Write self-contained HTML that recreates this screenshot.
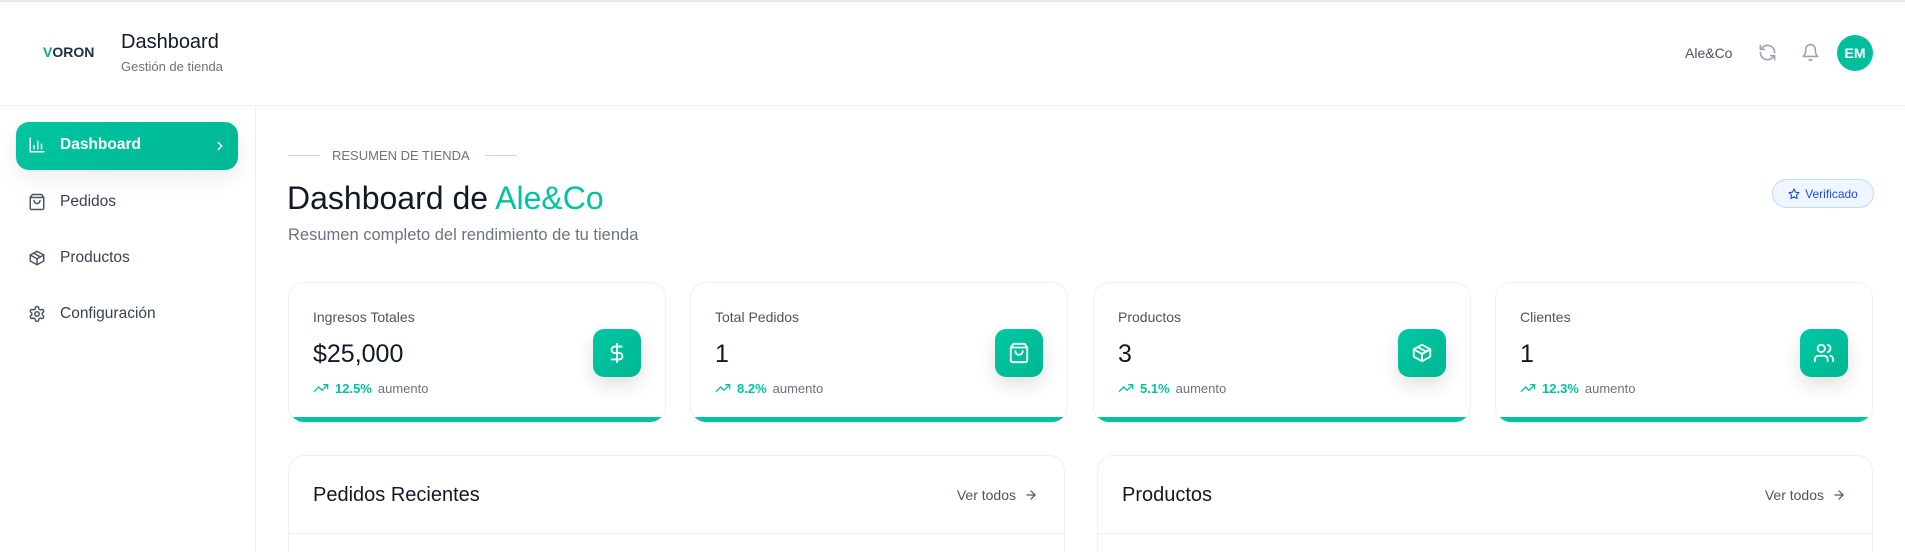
<!DOCTYPE html>
<html style="height:552px;overflow:hidden"><head><meta charset="utf-8"><style>
*{box-sizing:border-box;margin:0;padding:0}
body{width:1905px;height:552px;overflow:hidden;background:#fff;font-family:"Liberation Sans",sans-serif;color:#111827;position:relative}
.abs{position:absolute}
.teal{color:#00c4a0}
svg{display:block}
.card{position:absolute;top:282px;width:378px;height:141px;border:1px solid #eef0f2;border-radius:16px;overflow:hidden;background:#fff}
.card .bar{position:absolute;left:0;right:0;bottom:0;height:5px;background:#00c4a0}
.card .lab{position:absolute;left:24px;top:26px;font-size:14px;color:#4b5563}
.card .val{position:absolute;left:24px;top:57px;font-size:25px;color:#111827}
.card .tr{position:absolute;left:24px;top:97px;font-size:13px;color:#6b7280;display:flex;align-items:center;gap:6px}
.card .tr b{color:#00c4a0;font-weight:bold}
.card .ic{position:absolute;left:304px;top:46px;width:48px;height:48px;border-radius:11px;background:linear-gradient(135deg,#00c9a3,#00b594);box-shadow:0 8px 18px rgba(0,0,0,.12);display:flex;align-items:center;justify-content:center}
.panel{position:absolute;top:455px;height:97px;border:1px solid #eef0f2;border-bottom:none;border-radius:16px 16px 0 0;background:#fff}
.panel .t{position:absolute;left:24px;top:28px;font-size:20px;color:#111827}
.panel .v{position:absolute;right:26px;top:31px;font-size:14px;color:#4b5563;display:flex;align-items:center;gap:8px}
.panel .d{position:absolute;left:0;right:0;top:77px;border-top:1px solid #eef0f2}
.nav{position:absolute;left:28px;display:flex;align-items:center;gap:14px;font-size:15.5px;color:#374151}
</style></head><body>
<div class="abs" style="left:0;top:0;width:1905px;height:2px;background:#e5e7eb"></div>
<div class="abs" style="left:0;top:105px;width:1905px;height:1px;background:#eef0f2"></div>
<div class="abs" style="left:255px;top:106px;width:1px;height:446px;background:#eef0f2"></div>

<div class="abs" style="left:43px;top:44px;font-size:14px;font-weight:bold;color:#1f2f46"><span style="color:#0aa88f">V</span>ORON</div>
<div class="abs" style="left:121px;top:31px;font-size:20px;color:#111827">Dashboard</div>
<div class="abs" style="left:121px;top:59px;font-size:13px;color:#6b7280">Gestión de tienda</div>

<div class="abs" style="left:1685px;top:45px;font-size:14px;color:#4b5563">Ale&amp;Co</div>
<svg class="abs" style="left:1758px;top:43px" width="19" height="19" viewBox="0 0 24 24" fill="none" stroke="#9ca3af" stroke-width="2" stroke-linecap="round" stroke-linejoin="round"><path d="M21 12a9 9 0 0 0-15-6.7L3 8"/><path d="M3 3v5h5"/><path d="M3 12a9 9 0 0 0 15 6.7L21 16"/><path d="M16 16h5v5"/></svg>
<svg class="abs" style="left:1801px;top:43px" width="19" height="19" viewBox="0 0 24 24" fill="none" stroke="#9ca3af" stroke-width="2" stroke-linecap="round" stroke-linejoin="round"><path d="M6 8a6 6 0 0 1 12 0c0 7 3 9 3 9H3s3-2 3-9"/><path d="M10.3 21a1.94 1.94 0 0 0 3.4 0"/></svg>
<div class="abs" style="left:1837px;top:35px;width:36px;height:36px;border-radius:50%;background:#00bf9c;color:#fff;font-weight:bold;font-size:14px;display:flex;align-items:center;justify-content:center">EM</div>

<div class="abs" style="left:16px;top:122px;width:222px;height:48px;border-radius:13px;background:linear-gradient(135deg,#00c4a0,#00b896);box-shadow:0 8px 20px rgba(0,0,0,.08)"></div>
<div class="nav" style="top:136px;color:#fff;font-weight:bold">
<svg width="18" height="18" viewBox="0 0 24 24" fill="none" stroke="#fff" stroke-width="2" stroke-linecap="round"><path d="M3 3v18h18"/><path d="M8 17v-4"/><path d="M13 17V7"/><path d="M18 17v-6"/></svg>Dashboard</div>
<svg class="abs" style="left:213px;top:139px" width="14" height="14" viewBox="0 0 24 24" fill="none" stroke="#fff" stroke-width="2.5" stroke-linecap="round"><path d="M9 6l6 6-6 6"/></svg>
<div class="nav" style="top:193px"><svg width="18" height="18" viewBox="0 0 24 24" fill="none" stroke="#4b5563" stroke-width="2" stroke-linecap="round" stroke-linejoin="round"><path d="M6 2 3 6v14a2 2 0 0 0 2 2h14a2 2 0 0 0 2-2V6l-3-4z"/><path d="M3 6h18"/><path d="M16 10a4 4 0 0 1-8 0"/></svg>Pedidos</div>
<div class="nav" style="top:249px"><svg width="18" height="18" viewBox="0 0 24 24" fill="none" stroke="#4b5563" stroke-width="2" stroke-linecap="round" stroke-linejoin="round"><path d="M21 8 12 3 3 8v8l9 5 9-5z"/><path d="M3 8l9 5 9-5"/><path d="M12 13v8"/><path d="M7.5 5.5l9 5"/></svg>Productos</div>
<div class="nav" style="top:305px"><svg width="18" height="18" viewBox="0 0 24 24" fill="none" stroke="#4b5563" stroke-width="2" stroke-linecap="round" stroke-linejoin="round"><circle cx="12" cy="12" r="3"/><path d="M12.2 2h-.4a2 2 0 0 0-2 2v.2a2 2 0 0 1-1 1.7l-.4.3a2 2 0 0 1-2 0l-.2-.1a2 2 0 0 0-2.7.7l-.2.4a2 2 0 0 0 .7 2.7l.2.1a2 2 0 0 1 1 1.7v.5a2 2 0 0 1-1 1.7l-.2.1a2 2 0 0 0-.7 2.7l.2.4a2 2 0 0 0 2.7.7l.2-.1a2 2 0 0 1 2 0l.4.3a2 2 0 0 1 1 1.7v.2a2 2 0 0 0 2 2h.4a2 2 0 0 0 2-2v-.2a2 2 0 0 1 1-1.7l.4-.3a2 2 0 0 1 2 0l.2.1a2 2 0 0 0 2.7-.7l.2-.4a2 2 0 0 0-.7-2.7l-.2-.1a2 2 0 0 1-1-1.7v-.5a2 2 0 0 1 1-1.7l.2-.1a2 2 0 0 0 .7-2.7l-.2-.4a2 2 0 0 0-2.7-.7l-.2.1a2 2 0 0 1-2 0l-.4-.3a2 2 0 0 1-1-1.7V4a2 2 0 0 0-2-2z"/></svg>Configuración</div>

<div class="abs" style="left:288px;top:155px;width:32px;height:1px;background:#d1d5db"></div>
<div class="abs" style="left:332px;top:148px;font-size:13px;color:#6b7280">RESUMEN DE TIENDA</div>
<div class="abs" style="left:485px;top:155px;width:32px;height:1px;background:#d1d5db"></div>
<div class="abs" style="left:287px;top:180px;font-size:32px;color:#111827">Dashboard de <span class="teal">Ale&amp;Co</span></div>
<div class="abs" style="left:288px;top:226px;font-size:16.5px;color:#6b7280">Resumen completo del rendimiento de tu tienda</div>
<div class="abs" style="left:1772px;top:179px;width:102px;height:29px;border-radius:15px;border:1px solid #bfdbfe;background:#eff6ff;display:flex;align-items:center;justify-content:center;gap:5px;font-size:12px;color:#1d4ed8">
<svg width="12" height="12" viewBox="0 0 24 24" fill="none" stroke="#1d4ed8" stroke-width="2.2" stroke-linejoin="round"><path d="M12 2l3.1 6.3 6.9 1-5 4.9 1.2 6.8L12 17.8 5.8 21l1.2-6.8-5-4.9 6.9-1z"/></svg>Verificado</div>

<div class="card" style="left:288px"><div class="lab">Ingresos Totales</div><div class="val">$25,000</div>
<div class="tr"><svg width="16" height="16" viewBox="0 0 24 24" fill="none" stroke="#00c4a0" stroke-width="2" stroke-linecap="round" stroke-linejoin="round"><path d="M22 7l-8.5 8.5-5-5L2 17"/><path d="M16 7h6v6"/></svg><b>12.5%</b>aumento</div>
<div class="ic"><svg width="22" height="22" viewBox="0 0 24 24" fill="none" stroke="#fff" stroke-width="2" stroke-linecap="round"><path d="M12 2v20"/><path d="M17 5H9.5a3.5 3.5 0 0 0 0 7h5a3.5 3.5 0 0 1 0 7H6"/></svg></div><div class="bar"></div></div>
<div class="card" style="left:690px"><div class="lab">Total Pedidos</div><div class="val">1</div>
<div class="tr"><svg width="16" height="16" viewBox="0 0 24 24" fill="none" stroke="#00c4a0" stroke-width="2" stroke-linecap="round" stroke-linejoin="round"><path d="M22 7l-8.5 8.5-5-5L2 17"/><path d="M16 7h6v6"/></svg><b>8.2%</b>aumento</div>
<div class="ic"><svg width="22" height="22" viewBox="0 0 24 24" fill="none" stroke="#fff" stroke-width="2" stroke-linecap="round" stroke-linejoin="round"><path d="M6 2 3 6v14a2 2 0 0 0 2 2h14a2 2 0 0 0 2-2V6l-3-4z"/><path d="M3 6h18"/><path d="M16 10a4 4 0 0 1-8 0"/></svg></div><div class="bar"></div></div>
<div class="card" style="left:1093px"><div class="lab">Productos</div><div class="val">3</div>
<div class="tr"><svg width="16" height="16" viewBox="0 0 24 24" fill="none" stroke="#00c4a0" stroke-width="2" stroke-linecap="round" stroke-linejoin="round"><path d="M22 7l-8.5 8.5-5-5L2 17"/><path d="M16 7h6v6"/></svg><b>5.1%</b>aumento</div>
<div class="ic"><svg width="22" height="22" viewBox="0 0 24 24" fill="none" stroke="#fff" stroke-width="2" stroke-linecap="round" stroke-linejoin="round"><path d="M21 8 12 3 3 8v8l9 5 9-5z"/><path d="M3 8l9 5 9-5"/><path d="M12 13v8"/><path d="M7.5 5.5l9 5"/></svg></div><div class="bar"></div></div>
<div class="card" style="left:1495px"><div class="lab">Clientes</div><div class="val">1</div>
<div class="tr"><svg width="16" height="16" viewBox="0 0 24 24" fill="none" stroke="#00c4a0" stroke-width="2" stroke-linecap="round" stroke-linejoin="round"><path d="M22 7l-8.5 8.5-5-5L2 17"/><path d="M16 7h6v6"/></svg><b>12.3%</b>aumento</div>
<div class="ic"><svg width="22" height="22" viewBox="0 0 24 24" fill="none" stroke="#fff" stroke-width="2" stroke-linecap="round" stroke-linejoin="round"><circle cx="9" cy="7" r="4"/><path d="M2 21v-2a4 4 0 0 1 4-4h6a4 4 0 0 1 4 4v2"/><path d="M16 3.1a4 4 0 0 1 0 7.8"/><path d="M22 21v-2a4 4 0 0 0-3-3.9"/></svg></div><div class="bar"></div></div>

<div class="panel" style="left:288px;width:777px"><div class="t">Pedidos Recientes</div><div class="v">Ver todos <svg width="14" height="14" viewBox="0 0 24 24" fill="none" stroke="#4b5563" stroke-width="2" stroke-linecap="round"><path d="M5 12h14"/><path d="M12 5l7 7-7 7"/></svg></div><div class="d"></div></div>
<div class="panel" style="left:1097px;width:776px"><div class="t">Productos</div><div class="v">Ver todos <svg width="14" height="14" viewBox="0 0 24 24" fill="none" stroke="#4b5563" stroke-width="2" stroke-linecap="round"><path d="M5 12h14"/><path d="M12 5l7 7-7 7"/></svg></div><div class="d"></div></div>
</body></html>
